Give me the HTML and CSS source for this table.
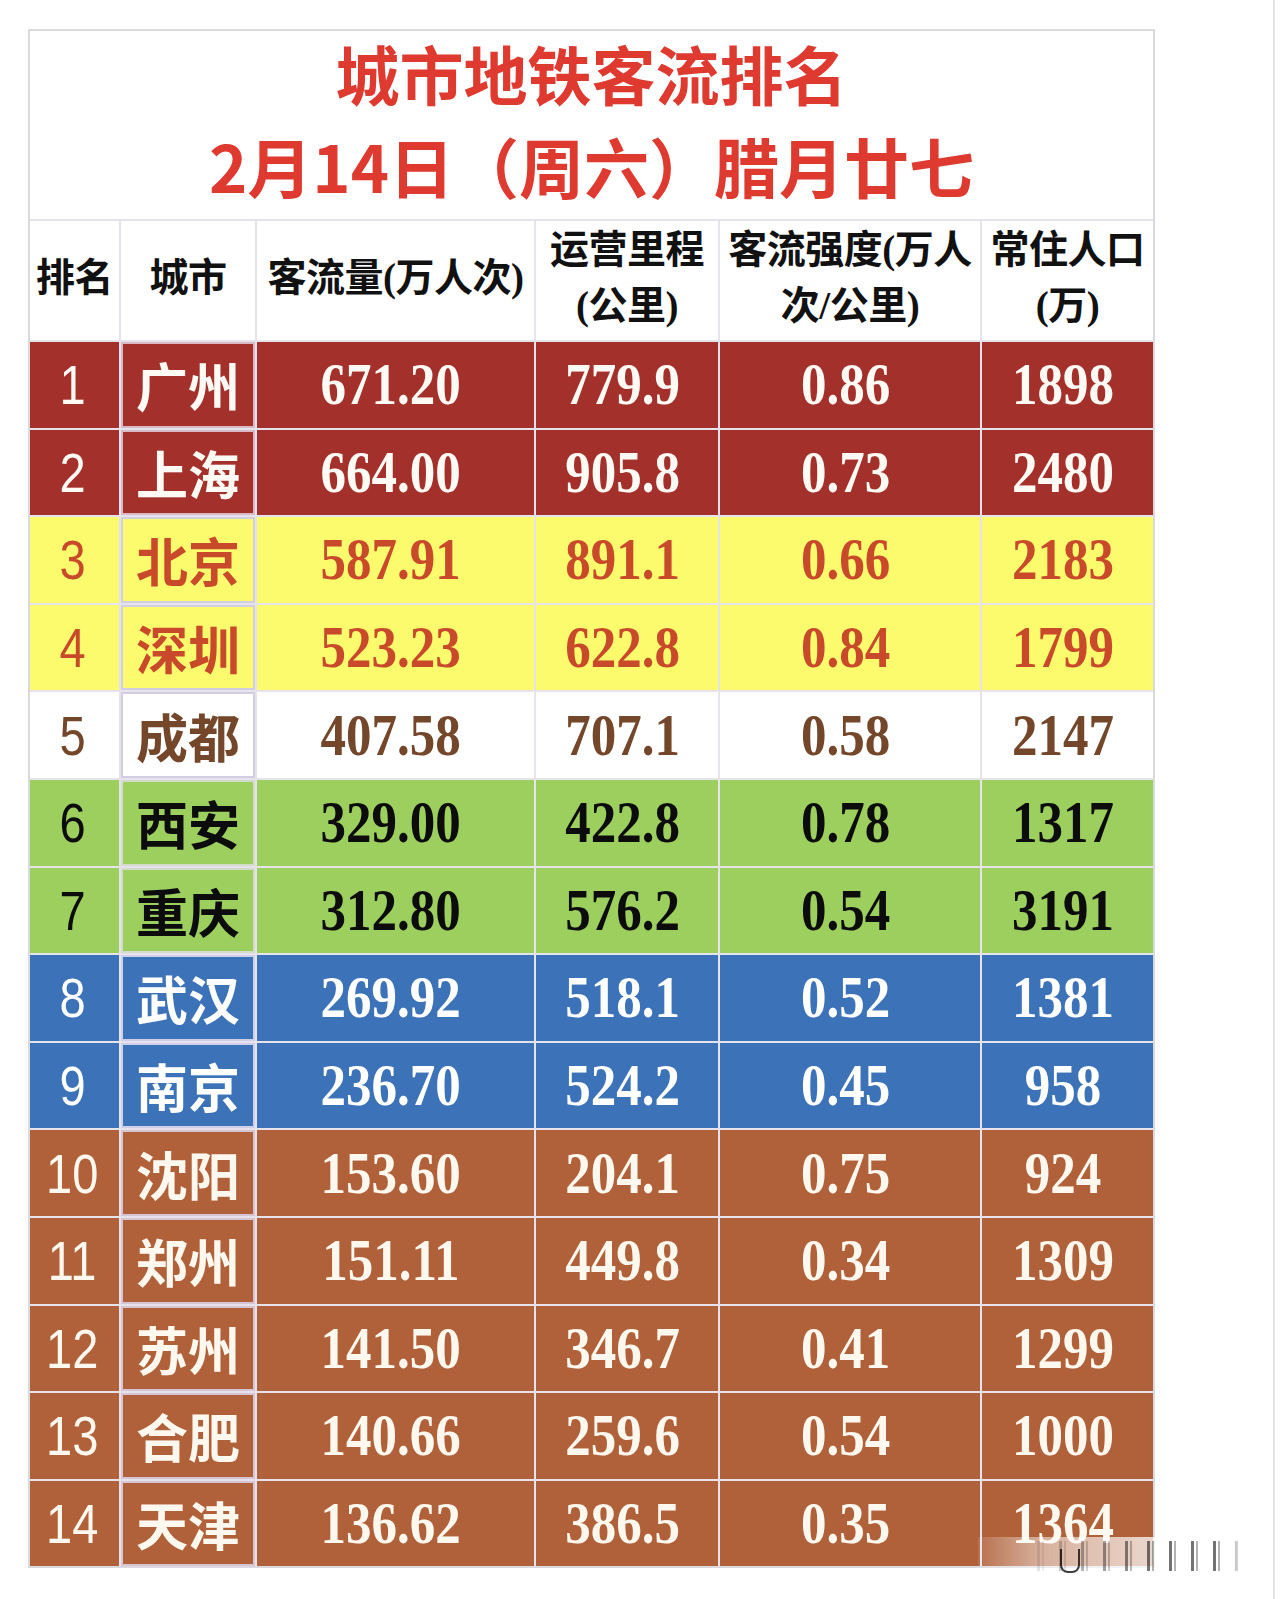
FILE: index.html
```html
<!DOCTYPE html>
<html lang="zh-CN">
<head>
<meta charset="utf-8">
<title>城市地铁客流排名</title>
<link rel="stylesheet" href="styles.css">
</head>
<body>
<div class="page">
  <div class="board">
    <div class="title">
      <div class="t1">城市地铁客流排名</div>
      <div class="t2">2月14日（周六）腊月廿七</div>
    </div>
    <div class="th">排名</div>
    <div class="th">城市</div>
    <div class="th">客流量(万人次)</div>
    <div class="th two">运营里程<br>(公里)</div>
    <div class="th two">客流强度(万人<br>次/公里)</div>
    <div class="th two">常住人口<br>(万)</div>

    <div class="row red"><div class="c rank"><span>1</span></div><div class="c city">广州</div><div class="c num"><span>671.20</span></div><div class="c num"><span>779.9</span></div><div class="c num"><span>0.86</span></div><div class="c num"><span>1898</span></div></div>
    <div class="row red"><div class="c rank"><span>2</span></div><div class="c city">上海</div><div class="c num"><span>664.00</span></div><div class="c num"><span>905.8</span></div><div class="c num"><span>0.73</span></div><div class="c num"><span>2480</span></div></div>
    <div class="row yellow"><div class="c rank"><span>3</span></div><div class="c city">北京</div><div class="c num"><span>587.91</span></div><div class="c num"><span>891.1</span></div><div class="c num"><span>0.66</span></div><div class="c num"><span>2183</span></div></div>
    <div class="row yellow"><div class="c rank"><span>4</span></div><div class="c city">深圳</div><div class="c num"><span>523.23</span></div><div class="c num"><span>622.8</span></div><div class="c num"><span>0.84</span></div><div class="c num"><span>1799</span></div></div>
    <div class="row white"><div class="c rank"><span>5</span></div><div class="c city">成都</div><div class="c num"><span>407.58</span></div><div class="c num"><span>707.1</span></div><div class="c num"><span>0.58</span></div><div class="c num"><span>2147</span></div></div>
    <div class="row green"><div class="c rank"><span>6</span></div><div class="c city">西安</div><div class="c num"><span>329.00</span></div><div class="c num"><span>422.8</span></div><div class="c num"><span>0.78</span></div><div class="c num"><span>1317</span></div></div>
    <div class="row green"><div class="c rank"><span>7</span></div><div class="c city">重庆</div><div class="c num"><span>312.80</span></div><div class="c num"><span>576.2</span></div><div class="c num"><span>0.54</span></div><div class="c num"><span>3191</span></div></div>
    <div class="row blue"><div class="c rank"><span>8</span></div><div class="c city">武汉</div><div class="c num"><span>269.92</span></div><div class="c num"><span>518.1</span></div><div class="c num"><span>0.52</span></div><div class="c num"><span>1381</span></div></div>
    <div class="row blue"><div class="c rank"><span>9</span></div><div class="c city">南京</div><div class="c num"><span>236.70</span></div><div class="c num"><span>524.2</span></div><div class="c num"><span>0.45</span></div><div class="c num"><span>958</span></div></div>
    <div class="row brown"><div class="c rank"><span>10</span></div><div class="c city">沈阳</div><div class="c num"><span>153.60</span></div><div class="c num"><span>204.1</span></div><div class="c num"><span>0.75</span></div><div class="c num"><span>924</span></div></div>
    <div class="row brown"><div class="c rank"><span>11</span></div><div class="c city">郑州</div><div class="c num"><span>151.11</span></div><div class="c num"><span>449.8</span></div><div class="c num"><span>0.34</span></div><div class="c num"><span>1309</span></div></div>
    <div class="row brown"><div class="c rank"><span>12</span></div><div class="c city">苏州</div><div class="c num"><span>141.50</span></div><div class="c num"><span>346.7</span></div><div class="c num"><span>0.41</span></div><div class="c num"><span>1299</span></div></div>
    <div class="row brown"><div class="c rank"><span>13</span></div><div class="c city">合肥</div><div class="c num"><span>140.66</span></div><div class="c num"><span>259.6</span></div><div class="c num"><span>0.54</span></div><div class="c num"><span>1000</span></div></div>
    <div class="row brown"><div class="c rank"><span>14</span></div><div class="c city">天津</div><div class="c num"><span>136.62</span></div><div class="c num"><span>386.5</span></div><div class="c num"><span>0.35</span></div><div class="c num"><span>1364</span></div></div>
  </div>
  <div class="watermark"><span class="wm-fade"></span><span class="wm-bars"></span><span class="wm-u"></span></div>
</div>
</body>
</html>
```

FILE: styles.css
```css
html, body {
  margin: 0;
  padding: 0;
  background: #ffffff;
}

.page {
  position: relative;
  width: 1273px;
  height: 1599px;
  border-right: 2px solid #e4e4e6;
  overflow: hidden;
}

.board {
  display: grid;
  grid-template-columns: 89px 134px 277px 182px 260px 171px;
  grid-template-rows: 188px 119px repeat(14, 85.6px);
  gap: 2px;
  width: max-content;
  margin: 29px 0 0 28px;
  border: 2px solid #d9d9de;
  background: #e6e3ec;
}

.title {
  grid-column: 1 / -1;
  background: #ffffff;
  color: #de3a30;
  font-family: "Noto Sans CJK SC", "Noto Sans", sans-serif;
  font-weight: 700;
  text-align: center;
}

.t1 {
  font-size: 64px;
  line-height: 83px;
}

.t2 {
  font-size: 65px;
  line-height: 103px;
}

.th {
  background: #ffffff;
  color: #111111;
  font-family: "Liberation Serif", "Noto Sans CJK SC", serif;
  font-weight: 700;
  font-size: 39px;
  line-height: 56px;
  display: flex;
  align-items: center;
  justify-content: center;
  text-align: center;
  white-space: nowrap;
  letter-spacing: -0.5px;
  padding-bottom: 5px;
}

.row {
  display: contents;
}

.c {
  display: flex;
  align-items: center;
  justify-content: center;
  white-space: nowrap;
}

.c span {
  display: inline-block;
}

.rank {
  font-family: "Liberation Sans", Arial, sans-serif;
  font-size: 56px;
  padding-right: 4px;
}

.rank span {
  transform: scaleX(0.84);
}

.city {
  font-family: "Noto Sans CJK SC", "Noto Sans", sans-serif;
  font-weight: 700;
  font-size: 52px;
  box-shadow: inset 0 0 0 2px #d2cde0;
}

.num {
  font-family: "Liberation Serif", "Times New Roman", serif;
  font-weight: 700;
  font-size: 60px;
  padding-right: 10px;
}

.num span {
  transform: scaleX(0.85);
}

.red .c { background: #a4302b; color: #fffaf4; }
.yellow .c { background: #fcfb6e; color: #c84a2b; }
.white .c { background: #ffffff; color: #74462a; }
.green .c { background: #9dcf5f; color: #0c0c0c; }
.blue .c { background: #3b72b8; color: #ffffff; }
.brown .c { background: #b0613a; color: #fff8ee; }

.red .city { box-shadow: inset 0 0 0 2px #d8b9c4; }
.blue .city { box-shadow: inset 0 0 0 2px #cdd0e8; }
.brown .city { box-shadow: inset 0 0 0 2px #d6c4d2; }
.green .city { box-shadow: inset 0 0 0 2px #d3dccb; }

.watermark {
  position: absolute;
  left: 978px;
  top: 1537px;
  width: 274px;
  height: 38px;
}

.wm-fade {
  position: absolute;
  left: 0;
  top: 0;
  width: 178px;
  height: 31px;
  background: linear-gradient(90deg, rgba(255,255,255,0.1) 0%, rgba(255,255,255,0.5) 35%, rgba(255,255,255,0.75) 100%);
}

.wm-bars {
  position: absolute;
  left: 50px;
  top: 4px;
  width: 210px;
  height: 30px;
  background:
    repeating-linear-gradient(90deg, transparent 0 9px, rgba(0,0,0,0.55) 9px 12px, transparent 12px 14px, rgba(0,0,0,0.3) 14px 16px, transparent 16px 22px);
  -webkit-mask-image: linear-gradient(90deg, rgba(0,0,0,0.1) 0%, rgba(0,0,0,0.6) 30%, #000 60%, #000 92%, rgba(0,0,0,0.3) 100%);
  mask-image: linear-gradient(90deg, rgba(0,0,0,0.1) 0%, rgba(0,0,0,0.6) 30%, #000 60%, #000 92%, rgba(0,0,0,0.3) 100%);
}

.wm-u {
  position: absolute;
  left: 82px;
  top: 12px;
  width: 16px;
  height: 22px;
  border: 2px solid rgba(0,0,0,0.75);
  border-top: none;
  border-radius: 0 0 8px 8px;
}
```
